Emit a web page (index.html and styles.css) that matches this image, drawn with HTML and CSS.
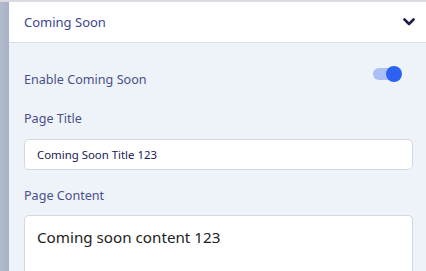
FILE: index.html
```html
<!DOCTYPE html>
<html>
<head>
<meta charset="utf-8">
<link rel="stylesheet" href="styles.css">
</head>
<body>
<div class="app">
  <div class="rail"></div>
  <div class="panel">
    <div class="header">
      <span class="header-title">Coming Soon</span>
      <svg class="chevron" width="12" height="9" viewBox="0 0 12 9"><path d="M1.5 1.5 L6 6 L10.5 1.5" fill="none" stroke="#1c2150" stroke-width="2.6" stroke-linecap="round" stroke-linejoin="round"/></svg>
    </div>
    <div class="body">
      <div class="row toggle-row">
        <span class="label">Enable Coming Soon</span>
        <span class="toggle"><span class="knob"></span></span>
      </div>
      <div class="field">
        <span class="label">Page Title</span>
        <div class="input">Coming Soon Title 123</div>
      </div>
      <div class="field grow">
        <span class="label">Page Content</span>
        <div class="textarea">Coming soon content 123</div>
      </div>
    </div>
  </div>
</div>
</body>
</html>
```
FILE: styles.css
```css
html, body {
  margin: 0;
  padding: 0;
  height: 100%;
  overflow: hidden;
  background: #eef2f9;
  font-family: "Noto Sans", "Open Sans", sans-serif;
}
.app {
  display: flex;
  height: 100%;
  border-top: 2px solid #d9dbe0;
  box-sizing: border-box;
}
.rail {
  width: 9px;
  flex: none;
  background: linear-gradient(90deg, #b3bccd, #a5b1c6);
}
.panel {
  flex: 1;
  display: flex;
  flex-direction: column;
  min-height: 0;
  overflow: hidden;
}
.header {
  height: 40px;
  background: #fff;
  border-bottom: 1px solid #d9dee8;
  display: flex;
  align-items: center;
  justify-content: space-between;
  padding: 0 11px 0 15px;
  flex: none;
}
.header-title {
  font-size: 13px;
  color: #3a4590;
}
.chevron { display: block; }
.body {
  flex: 1;
  min-height: 0;
  padding: 0 13px 0 15px;
  display: flex;
  flex-direction: column;
}
.label {
  font-size: 12.6px;
  color: #4a5088;
}
.toggle-row {
  display: flex;
  justify-content: space-between;
  align-items: center;
  height: 30px;
  margin-top: 21px;
  padding-right: 12px;
}
.toggle {
  width: 28px;
  height: 12px;
  border-radius: 6px;
  background: #a9bff5;
  position: relative;
  margin-top: -10px;
}
.knob {
  position: absolute;
  right: -1px;
  top: -2px;
  width: 16px;
  height: 16px;
  border-radius: 50%;
  background: #2c62f2;
}
.field {
  display: flex;
  flex-direction: column;
}
.field.grow {
  flex: 1;
  min-height: 0;
}
.field .label {
  line-height: 18px;
  margin-top: 16px;
  margin-bottom: 11px;
}
.field + .field .label {
  margin-top: 17px;
  margin-bottom: 10px;
}
.input {
  height: 31px;
  box-sizing: border-box;
  background: #fff;
  border: 1px solid #d2d7e2;
  border-radius: 5px;
  padding: 0 12px;
  display: flex;
  align-items: center;
  font-size: 11.4px;
  color: #161a50;
}
.textarea {
  flex: 1;
  box-sizing: border-box;
  background: #fff;
  border: 1px solid #d2d7e2;
  border-bottom: none;
  border-radius: 5px 5px 0 0;
  padding: 11px 12px;
  font-size: 15.2px;
  color: #222;
}
```
